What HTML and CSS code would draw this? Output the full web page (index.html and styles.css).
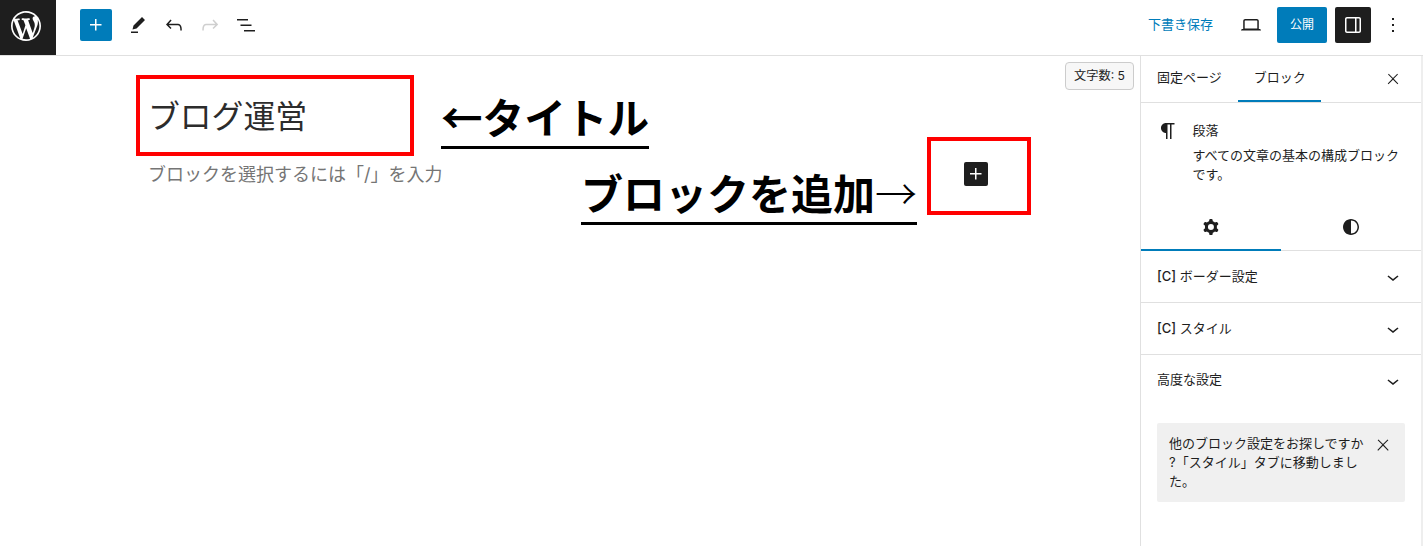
FILE: index.html
```html
<!DOCTYPE html>
<html lang="ja">
<head>
  <meta charset="UTF-8">
  <title>ブログ運営</title>
  <link rel="stylesheet" href="styles.css">
</head>
<body>

<div class="app">
  <header class="topbar">
    <div class="wp-logo">
      <svg width="30" height="30" viewBox="0 0 20 20"><path d="M20 10c0-5.51-4.49-10-10-10C4.48 0 0 4.49 0 10c0 5.52 4.48 10 10 10 5.51 0 10-4.48 10-10zM7.78 15.37L4.37 6.22c.55-.02 1.17-.08 1.17-.08.5-.06.44-1.13-.06-1.11 0 0-1.45.11-2.37.11-.18 0-.37 0-.58-.01C4.12 2.69 6.87 1.11 10 1.11c2.33 0 4.45.87 6.05 2.34-.68-.11-1.65.39-1.65 1.58 0 .74.45 1.36.9 2.1.35.61.55 1.36.55 2.46 0 1.49-1.4 5-1.4 5l-3.03-8.37c.54-.02.82-.17.82-.17.5-.05.44-1.25-.06-1.22 0 0-1.44.12-2.38.12-.87 0-2.33-.12-2.33-.12-.5-.03-.56 1.2-.06 1.22l.92.08 1.26 3.41zM17.41 10c.24-.64.74-1.87.43-4.25.7 1.29 1.05 2.71 1.05 4.25 0 3.29-1.73 6.24-4.4 7.78.97-2.59 1.94-5.2 2.92-7.78zM6.1 18.09C3.12 16.65 1.11 13.53 1.11 10c0-1.3.23-2.48.72-3.59C3.25 10.3 4.67 14.2 6.1 18.09zm4.03-6.63l2.58 6.98c-.86.29-1.76.45-2.71.45-.79 0-1.57-.11-2.29-.33.81-2.38 1.62-4.74 2.42-7.1z"/></svg>
    </div>
    <div class="tools">
      <button class="icon-btn add-btn"><svg width="24" height="24" viewBox="0 0 24 24"><path d="M11 12.5V17.5H12.5V12.5H17.5V11H12.5V6H11V11H6V12.5H11Z"/></svg></button>
      <button class="icon-btn"><svg width="24" height="24" viewBox="0 0 24 24"><path d="m19 7-3-3-8.5 8.5-1 4 4-1L19 7Zm-7 11.5H5V20h7v-1.5Z"/></svg></button>
      <button class="icon-btn"><svg width="24" height="24" viewBox="0 0 24 24"><path d="M18.3 11.7c-.6-.6-1.4-.9-2.3-.9H6.7l2.9-3.3-1.1-1-4.5 5L8.5 16l1-1-2.7-2.7H16c.5 0 .9.2 1.3.5 1 1 1 3.4 1 4.5v.3h1.5v-.2c0-1.5 0-4.3-1.5-5.7z"/></svg></button>
      <button class="icon-btn disabled"><svg width="24" height="24" viewBox="0 0 24 24"><path d="M15.6 6.5l-1.1 1 2.9 3.3H8c-.9 0-1.7.3-2.3.9-1.4 1.5-1.4 4.2-1.4 5.6v.2h1.5v-.3c0-1.1 0-3.5 1-4.5.3-.3.7-.5 1.3-.5h9.2L14.5 15l1.1 1.1 4.6-4.6-4.6-5z"/></svg></button>
      <button class="icon-btn"><svg width="24" height="24" viewBox="0 0 24 24"><path d="M3 6h11v1.5H3V6Zm3.5 5.5h11V13h-11v-1.5ZM21 17H10v1.5h11V17Z"/></svg></button>
    </div>
    <div class="actions">
      <button class="save-btn">下書き保存</button>
      <button class="icon-btn view-btn"><svg width="24" height="24" viewBox="0 0 24 24"><path d="M20.5 16h-.7V8c0-1.1-.9-2-2-2H6.2c-1.1 0-2 .9-2 2v8h-.7c-.8 0-1.5.7-1.5 1.5h20c0-.8-.7-1.5-1.5-1.5zM5.7 8c0-.3.2-.5.5-.5h11.6c.3 0 .5.2.5.5v7.6H5.7V8z"/></svg></button>
      <button class="publish-btn">公開</button>
      <button class="icon-btn panel-btn"><svg width="24" height="24" viewBox="0 0 24 24"><path d="M18 4H6c-1.1 0-2 .9-2 2v12c0 1.1.9 2 2 2h12c1.1 0 2-.9 2-2V6c0-1.1-.9-2-2-2zm-4 14.5H6c-.3 0-.5-.2-.5-.5V6c0-.3.2-.5.5-.5h8v13zm4.5-.5c0 .3-.2.5-.5.5h-2.5v-13H18c.3 0 .5.2.5.5v12z"/></svg></button>
      <button class="icon-btn more-btn"><svg width="24" height="24" viewBox="0 0 24 24"><path d="M13 19h-2v-2h2v2zm0-6h-2v-2h2v2zm0-6h-2V5h2v2z"/></svg></button>
    </div>
  </header>

  <div class="workspace">
    <main class="canvas">
      <div class="post-title">ブログ運営</div>
      <div class="placeholder">ブロックを選択するには「/」を入力</div>

      <div class="word-count">文字数: 5</div>

      <!-- 説明用の注釈 -->
      <div class="red-box title-box"></div>
      <div class="note note-title">←タイトル</div>
      <div class="note note-block">ブロックを追加<span class="thin">→</span></div>
      <div class="red-box block-box">
        <button class="inline-add"><svg width="24" height="24" viewBox="0 0 24 24"><path d="M11 12.5V17.5H12.5V12.5H17.5V11H12.5V6H11V11H6V12.5H11Z"/></svg></button>
      </div>
    </main>

    <aside class="sidebar">
      <div class="side-tabs">
        <div class="side-tab">固定ページ</div>
        <div class="side-tab active">ブロック</div>
        <button class="icon-btn side-close"><svg width="24" height="24" viewBox="0 0 24 24"><path d="M13 11.8l6.1-6.3-1-1-6.1 6.2-6.1-6.2-1 1 6.1 6.3-6.5 6.7 1 1 6.5-6.6 6.5 6.6 1-1z" transform="translate(3.6 3.6) scale(.7)"/></svg></button>
      </div>

      <div class="block-card">
        <svg class="block-icon" width="24" height="24" viewBox="0 0 24 24"><path d="m9.99609 14v-.2251l.00391.0001v6.225h1.5v-14.5h2.5v14.5h1.5v-14.5h3v-1.5h-8.50391c-2.76142 0-5 2.23858-5 5 0 2.7614 2.23858 5 5 5z"/></svg>
        <div class="block-info">
          <div class="block-name">段落</div>
          <div class="block-desc">すべての文章の基本の構成ブロックです。</div>
        </div>
      </div>

      <div class="style-tabs">
        <div class="style-tab active"><svg width="24" height="24" viewBox="0 0 24 24"><path fill-rule="evenodd" d="M10.289 4.836A1 1 0 0111.275 4h1.306a1 1 0 01.987.836l.244 1.466c.787.26 1.503.679 2.108 1.218l1.393-.522a1 1 0 011.216.437l.653 1.13a1 1 0 01-.23 1.273l-1.148.944a6.025 6.025 0 010 2.435l1.149.946a1 1 0 01.23 1.272l-.653 1.13a1 1 0 01-1.216.437l-1.394-.522c-.605.54-1.32.958-2.108 1.218l-.244 1.466a1 1 0 01-.987.836h-1.306a1 1 0 01-.986-.836l-.244-1.466a5.995 5.995 0 01-2.108-1.218l-1.394.522a1 1 0 01-1.217-.436l-.653-1.131a1 1 0 01.23-1.272l1.149-.946a6.026 6.026 0 010-2.435l-1.148-.944a1 1 0 01-.23-1.272l.653-1.131a1 1 0 011.217-.437l1.393.522a5.994 5.994 0 012.108-1.218l.244-1.466zM14.929 12a3 3 0 11-6 0 3 3 0 016 0z"/></svg></div>
        <div class="style-tab"><svg width="24" height="24" viewBox="0 0 24 24"><path d="M12 4c-4.4 0-8 3.6-8 8s3.6 8 8 8 8-3.6 8-8-3.6-8-8-8zm0 14.5V5.5c3.6 0 6.5 2.9 6.5 6.5s-2.9 6.5-6.5 6.5z"/></svg></div>
      </div>

      <div class="panel-row">
        <span><b>[C]</b> ボーダー設定</span>
        <svg width="24" height="24" viewBox="0 0 24 24"><path d="M17.5 11.6L12 16l-5.5-4.4.9-1.2L12 14l4.5-3.6 1 1.2z"/></svg>
      </div>
      <div class="panel-row">
        <span><b>[C]</b> スタイル</span>
        <svg width="24" height="24" viewBox="0 0 24 24"><path d="M17.5 11.6L12 16l-5.5-4.4.9-1.2L12 14l4.5-3.6 1 1.2z"/></svg>
      </div>
      <div class="panel-row last">
        <span>高度な設定</span>
        <svg width="24" height="24" viewBox="0 0 24 24"><path d="M17.5 11.6L12 16l-5.5-4.4.9-1.2L12 14l4.5-3.6 1 1.2z"/></svg>
      </div>

      <div class="notice">
        <p>他のブロック設定をお探しですか<br>?「スタイル」タブに移動しまし<br>た。</p>
        <svg class="notice-close" width="24" height="24" viewBox="0 0 24 24"><path d="M13 11.8l6.1-6.3-1-1-6.1 6.2-6.1-6.2-1 1 6.1 6.3-6.5 6.7 1 1 6.5-6.6 6.5 6.6 1-1z" transform="translate(3 2) scale(.75)"/></svg>
      </div>
    </aside>
  </div>
</div>

</body>
</html>
```

FILE: styles.css
```css
* {
  box-sizing: border-box;
}
html, body {
  height: 100%;
}
body {
  margin: 0;
  background: #fff;
  color: #1e1e1e;
  font-family: Inter, "Noto Sans CJK JP", sans-serif;
  font-size: 13px;
  overflow: hidden;
}
button {
  font: inherit;
  border: none;
  background: none;
  padding: 0;
  cursor: pointer;
}
svg {
  display: block;
  fill: currentColor;
}
.app {
  display: flex;
  flex-direction: column;
  height: 100%;
}

/* header */
.topbar {
  display: flex;
  align-items: center;
  height: 56px;
  border-bottom: 1px solid #e0e0e0;
  flex-shrink: 0;
}
.wp-logo {
  display: flex;
  align-items: center;
  justify-content: center;
  width: 56px;
  height: 55px;
  padding: 0 4px 3px 0;
  background: #1e1e1e;
  color: #fff;
  margin-right: 24px;
}
.tools {
  display: flex;
  align-items: center;
  margin-bottom: 5px;
}
.icon-btn {
  display: flex;
  align-items: center;
  justify-content: center;
  width: 36px;
  height: 36px;
  border-radius: 2px;
  color: #1e1e1e;
}
.add-btn {
  width: 32px;
  height: 32px;
  background: #007cba;
  color: #fff;
  margin-right: 8px;
}
.disabled {
  color: #cfcfcf;
}
.actions {
  display: flex;
  align-items: center;
  margin-left: auto;
  margin-bottom: 5px;
  padding-right: 12px;
}
.save-btn {
  color: #007cba;
  margin-right: 20px;
  padding-bottom: 4px;
}
.view-btn {
  margin-right: 8px;
}
.publish-btn {
  width: 50px;
  height: 36px;
  padding-bottom: 4px;
  background: #007cba;
  color: #fff;
  border-radius: 2px;
  font-size: 12px;
  margin-right: 8px;
}
.panel-btn {
  background: #1e1e1e;
  color: #fff;
  margin-right: 4px;
}

/* editor */
.workspace {
  display: flex;
  flex: 1;
  min-height: 0;
}
.canvas {
  position: relative;
  flex: 1;
  padding: 38px 0 0 148px;
}
.post-title {
  font-size: 31.8px;
  line-height: 46px;
  color: #2c2c2c;
}
.placeholder {
  margin-top: 22px;
  font-size: 18px;
  line-height: 26px;
  color: #757575;
}
.word-count {
  position: absolute;
  top: 6px;
  right: 6px;
  height: 28px;
  padding: 0 8px;
  border: 1px solid #ccc;
  border-radius: 4px;
  background: #f7f7f7;
  font-size: 12.2px;
  line-height: 25px;
}
.red-box {
  position: absolute;
  border: 4px solid #f00;
}
.title-box {
  left: 136px;
  top: 19px;
  width: 278px;
  height: 81px;
}
.block-box {
  display: flex;
  align-items: center;
  justify-content: center;
  left: 927px;
  top: 81px;
  width: 104px;
  height: 78px;
}
.inline-add {
  width: 24px;
  height: 24px;
  margin: 0 7px 4px 0;
  background: #1e1e1e;
  color: #fff;
  border-radius: 2px;
}
.note {
  position: absolute;
  color: #000;
  font-family: "Noto Sans CJK JP", sans-serif;
  font-weight: 700;
  font-size: 42px;
  line-height: 52px;
  white-space: nowrap;
}
.note-title {
  left: 441px;
  top: 34px;
  height: 59px;
  font-size: 41.6px;
  border-bottom: 3px solid #000;
}
.note-block {
  left: 581px;
  top: 110px;
  height: 59px;
  border-bottom: 3px solid #000;
}
.thin {
  font-weight: 300;
}

/* sidebar */
.sidebar {
  width: 283px;
  flex-shrink: 0;
  border-left: 1px solid #e0e0e0;
  border-right: 2px solid #eee;
  background: #fff;
}
.side-tabs {
  display: flex;
  align-items: center;
  height: 47px;
  border-bottom: 1px solid #e0e0e0;
}
.side-tab {
  height: 46px;
  padding: 0 16px;
  line-height: 43px;
}
.side-tab.active {
  padding-right: 15px;
  box-shadow: inset 0 -2px 0 #007cba;
}
.side-close {
  margin-left: auto;
  margin-right: 10px;
}
.block-card {
  display: flex;
  padding: 16px 16px 0;
  height: 102px;
}
.block-icon {
  flex-shrink: 0;
  margin: 0 12.5px 0 -1px;
}
.block-info {
  width: 208px;
}
.block-name {
  line-height: 23px;
}
.block-desc {
  margin-top: 4px;
  line-height: 19px;
}
.style-tabs {
  display: flex;
  height: 46px;
  border-bottom: 1px solid #e0e0e0;
}
.style-tab {
  display: flex;
  align-items: center;
  justify-content: center;
  width: 140px;
  height: 46px;
  padding-bottom: 2px;
}
.style-tab.active {
  box-shadow: inset 0 -2px 0 #007cba;
}
.panel-row {
  display: flex;
  align-items: center;
  justify-content: space-between;
  height: 52px;
  padding: 0 16px;
  border-bottom: 1px solid #e0e0e0;
}
.panel-row span {
  margin-bottom: 3px;
}
.panel-row b {
  font-weight: 500;
}
.panel-row.last {
  border-bottom: none;
}
.panel-row.last span {
  margin-bottom: 5px;
}
.notice {
  display: flex;
  justify-content: space-between;
  margin: 16px 16px 0;
  padding: 11px 10px 11px 12px;
  background: #f0f0f0;
  border-radius: 2px;
}
.notice p {
  margin: 0;
  line-height: 19px;
}
.notice-close {
  flex-shrink: 0;
}
```
